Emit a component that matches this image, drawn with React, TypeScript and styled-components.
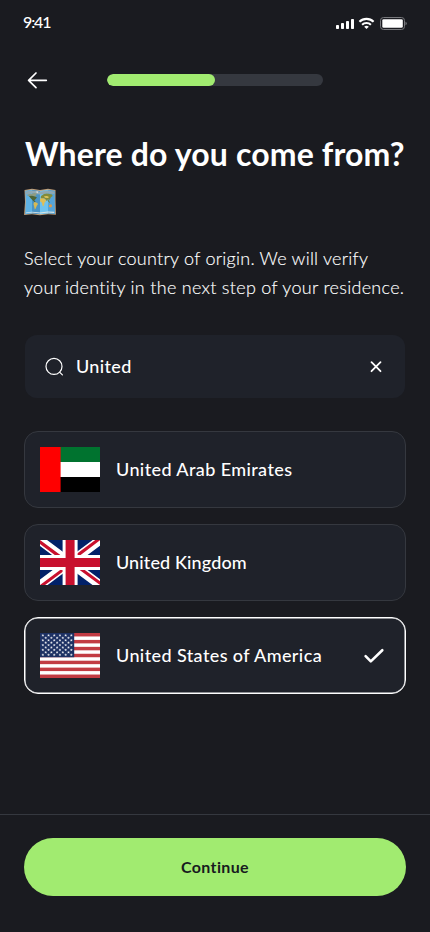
import React from "react";
import styled, { createGlobalStyle } from "styled-components";

const GlobalStyle = createGlobalStyle`
  * { box-sizing: border-box; }
  body { margin: 0; background: #1a1b20; }
`;

const Screen = styled.main`
  width: 430px;
  height: 932px;
  display: flex;
  flex-direction: column;
  overflow: hidden;
  background: #1a1b20;
  color: #fff;
  font-family: Lato, "Open Sans", sans-serif;
`;

const StatusBar = styled.div`
  height: 44px;
  padding: 0 23px;
  display: flex;
  align-items: center;
  justify-content: space-between;
`;

const Clock = styled.span`
  font-size: 16px;
  line-height: 20px;
  margin-top: -1px;
  letter-spacing: -1.1px;
  font-weight: 500;
`;

const StatusIcons = styled.svg`
  display: block;
  width: 72px;
  height: 14px;
  margin-top: 1px;
`;

const Header = styled.header`
  height: 72px;
  padding: 0 24px;
  display: grid;
  grid-template-columns: 28px 216px 28px;
  justify-content: space-between;
  align-items: center;
`;

const IconButton = styled.button`
  display: flex;
  padding: 0;
  border: 0;
  background: none;
  color: #fff;
`;

const Track = styled.div`
  height: 12px;
  border-radius: 6px;
  background: #35383f;
  overflow: hidden;
`;

const Fill = styled.div`
  width: 50%;
  height: 100%;
  border-radius: 6px;
  background: #a1eb70;
`;

const Title = styled.h1`
  margin: 14px 0 0;
  padding-left: 25px;
  height: 96px;
  font-size: 32px;
  line-height: 48px;
  font-weight: 700;
  letter-spacing: 0.15px;
  white-space: nowrap;
`;

const MapIcon = styled.svg`
  display: block;
  margin: 10px 0 0 -1px;
`;

const Intro = styled.p`
  margin: 18px 24px 0;
  font-size: 18px;
  line-height: 29px;
  font-weight: 300;
  white-space: nowrap;
  -webkit-text-stroke: 0.15px #fff;
`;

const IntroLine = styled.span<{ $spacing: number }>`
  display: block;
  letter-spacing: ${(p) => p.$spacing}px;
`;

const Search = styled.div`
  margin: 33px 25px 0;
  height: 63px;
  padding: 0 20px;
  display: flex;
  align-items: center;
  gap: 11px;
  border-radius: 12px;
  background: #1f222a;
`;

const Label = styled.span<{ $spacing: number }>`
  flex: 1;
  font-size: 18px;
  line-height: 24px;
  margin-top: -1px;
  font-weight: 500;
  letter-spacing: ${(p) => p.$spacing}px;
`;

const Options = styled.div`
  margin: 33px 24px 0;
  display: flex;
  flex-direction: column;
  gap: 16px;
`;

const Option = styled.div<{ $selected?: boolean }>`
  height: 77px;
  padding: 0 20px 0 15px;
  display: flex;
  align-items: center;
  gap: 16px;
  border: 1px solid ${(p) => (p.$selected ? "#fff" : "#35383f")};
  box-shadow: ${(p) => (p.$selected ? "inset 0 0 0 0.5px #fff" : "none")};
  border-radius: 14px;
  background: #1f222a;
`;

const Flag = styled.svg`
  display: block;
  flex: none;
  width: 60px;
  height: 45px;
`;

const Footer = styled.footer`
  margin-top: auto;
  height: 118px;
  padding: 23px 24px 0;
  border-top: 1px solid #35383f;
`;

const ContinueButton = styled.button`
  width: 100%;
  height: 58px;
  border: 0;
  border-radius: 29px;
  background: #a1eb70;
  color: #181a20;
  font: 700 16px/24px Lato, sans-serif;
  letter-spacing: 0.35px;
  padding: 0;
`;

function WorldMap() {
  return (
    <MapIcon width="32" height="28" viewBox="0 0 32 28">
      <path d="M.5 2 8 .7l8 1.4L24 .7l7.5 1.4v10l.4 14.6-8-.4-8 .9-8-.9-7.8.7L1 14Z" fill="#c4a078" />
      <path d="m1.3 2.8 6.7-1v23.7l-6.9.8L1.8 14Z" fill="#5fb2e4" />
      <path d="m8 1.8 8 1.2v23.3l-8-.8Z" fill="#4a94c6" />
      <path d="m16 3 8-1.2v23.6l-8 .9Z" fill="#6fc3ef" />
      <path d="m24 1.8 6.8 1v10.6l.3 12.7-7.1-.7Z" fill="#55a4d8" />
      <path d="M2 3.6 8 2.5l8 1.3 8-1.3 6.4 1.2v2.4L24 5.4l-8 1-8-1-6.2 1Z" fill="#8fa9b4" />
      <path d="m3 7 3-1.2L8 6l2-.9 3 .5-1 2-1 1.4-4 .1-3-1.2Z" fill="#8d9c84" />
      <path d="m5 8 3-.3 3 .7 2 1-1.6 1.8-1.1 1.3 1.5 1.6-1.5-.2-2.2-2.1L6.4 10Z" fill="#4d6537" />
      <path d="m10.5 13.9 2.5.9 1 1.2-1.3 2-1 2.6-.9 1-.8-3.7-.6-2.1Z" fill="#d8b953" />
      <path d="m17 8 3-2 3-.4 5 .8.7 1.7-1.8 1.2-1.2 2.4-1.8-.2-1.1 1.5-1.8-2.1-1-.7-2.2.7-1.1-1.4Z" fill="#838b3b" />
      <path d="m16 10.6 2.8-.4 2.2.9 1 2-1.5 1.7-.5 2.6-1.2.8-1-3.8-1.6-.9Z" fill="#dfbe56" />
      <path d="m20 8.3 3-.3 2 1-1 1.1-3-.3Z" fill="#dfc75e" />
      <path d="m25 17.3 1.4-1 1.4.5.3 1.8-1.7.9-1.5-.8Z" fill="#df9b4a" />
      <path d="m24 12 1 2 .8.4" stroke="#687f42" fill="none" />
      <path d="m2 24.4 6-.7 8 .7 8-1 6.2.4v1.1L24 24.6l-8 .9-8-1-6.2.8Z" fill="#dbe4e4" />
      <path d="m11.5 3.7 2-.5 1 .6-1 1.5Z" fill="#d5dadd" />
    </MapIcon>
  );
}

function FlagUAE() {
  return (
    <Flag viewBox="0 0 60 45">
      <path fill="#00732f" d="M0 0h60v15H0z" />
      <path fill="#fff" d="M0 15h60v15H0z" />
      <path d="M0 30h60v15H0z" />
      <path fill="#f00" d="M0 0h20.6v45H0z" />
    </Flag>
  );
}

function FlagUK() {
  return (
    <Flag viewBox="0 0 640 480">
      <path fill="#012169" d="M0 0h640v480H0z" />
      <path fill="#fff" d="m75 0 244 181L562 0h78v62L400 241l240 178v61h-80L320 301 81 480H0v-60l239-178L0 64V0z" />
      <path fill="#c8102e" d="m424 281 216 159v40L369 281zm-184 20 6 35L54 480H0zM640 0v3L391 191l2-44L590 0zM0 0l239 176h-60L0 42z" />
      <path fill="#fff" d="M241 0v480h160V0zM0 160v160h640V160z" />
      <path fill="#c8102e" d="M0 193v96h640v-96zM273 0v480h96V0z" />
    </Flag>
  );
}

function FlagUSA() {
  const rows = Array.from({ length: 9 }, (_, i) => i);
  return (
    <Flag viewBox="0 0 60 45">
      <path fill="#fff" d="M0 0h60v45H0z" />
      {Array.from({ length: 7 }, (_, i) => (
        <rect key={i} y={(i * 90) / 13} width="60" height={45 / 13} fill="#c23b43" />
      ))}
      <path fill="#1d3163" d="M0 0h34.2v24.23H0z" />
      {rows.map((r) =>
        Array.from({ length: r % 2 ? 5 : 6 }, (_, c) => (
          <path
            key={`${r}-${c}`}
            transform={`translate(${2.85 + c * 5.7 + (r % 2 ? 2.85 : 0)} ${2.42 + r * 2.42})`}
            d="m0-1.15.28.78h.82l-.66.5.25.8L0 .45l-.69.48.25-.8-.66-.5h.82Z"
            fill="#fff"
            stroke="#fff"
            strokeWidth=".25"
          />
        ))
      )}
    </Flag>
  );
}

export default function App() {
  return (
    <Screen>
      <GlobalStyle />
      <StatusBar>
        <Clock>9:41</Clock>
        <StatusIcons viewBox="0 0 72 14" fill="#fff">
          <rect x="1" y="9" width="3" height="4" rx=".8" />
          <rect x="6" y="7" width="3" height="6" rx=".8" />
          <rect x="11" y="5" width="3" height="8" rx=".8" />
          <rect x="16" y="3" width="3" height="10" rx=".8" />
          <g fill="none" stroke="#fff" strokeWidth="2.1">
            <path d="M24.4 5.8a10.2 10.2 0 0 1 14.2 0" />
            <path d="M27.1 8.8a6.3 6.3 0 0 1 8.8 0" />
          </g>
          <path d="M29.2 10.8a3.3 3.3 0 0 1 4.6 0l-2.3 2.3Z" />
          <rect x="45.5" y="1.5" width="24" height="12" rx="3" fill="none" stroke="#77787c" />
          <rect x="47.3" y="3.2" width="20.5" height="8.6" rx="1.4" />
          <path d="M70.5 5.7c.8.3 1.3 1 1.3 1.8s-.5 1.5-1.3 1.8Z" fill="#77787c" />
        </StatusIcons>
      </StatusBar>
      <Header>
        <IconButton aria-label="Back">
          <svg width="28" height="28" viewBox="0 0 28 28" fill="none" stroke="currentColor" strokeWidth="1.7" strokeLinecap="round" strokeLinejoin="round">
            <path d="M22.3 14.3H4.6M12 7l-7.4 7.3L12 21.6" />
          </svg>
        </IconButton>
        <Track><Fill /></Track>
      </Header>
      <Title>
        Where do you come from?
        <WorldMap />
      </Title>
      <Intro>
        <IntroLine $spacing={0.25}>Select your country of origin. We will verify</IntroLine>
        <IntroLine $spacing={0.29}>your identity in the next step of your residence.</IntroLine>
      </Intro>
      <Search>
        <svg width="20" height="20" viewBox="0 0 20 20" fill="none" stroke="#fff" strokeWidth="1.2" strokeLinecap="round">
          <circle cx="9" cy="9.4" r="8" />
          <path d="m14.8 15.3 2.6 2.6" />
        </svg>
        <Label $spacing={0.35}>United</Label>
        <svg width="18" height="18" viewBox="0 0 18 18" fill="none" stroke="#fff" strokeWidth="1.8" strokeLinecap="round">
          <path d="m4.5 4.2 9 9m0-9-9 9" />
        </svg>
      </Search>
      <Options>
        <Option><FlagUAE /><Label $spacing={0.4}>United Arab Emirates</Label></Option>
        <Option><FlagUK /><Label $spacing={0.12}>United Kingdom</Label></Option>
        <Option $selected>
          <FlagUSA />
          <Label $spacing={0.4}>United States of America</Label>
          <svg width="22" height="18" viewBox="0 0 22 18" fill="none" stroke="#fff" strokeWidth="2.6" strokeLinecap="round" strokeLinejoin="round">
            <path d="m2.6 9.2 5.2 5.2L19.3 3.2" />
          </svg>
        </Option>
      </Options>
      <Footer>
        <ContinueButton>Continue</ContinueButton>
      </Footer>
    </Screen>
  );
}
